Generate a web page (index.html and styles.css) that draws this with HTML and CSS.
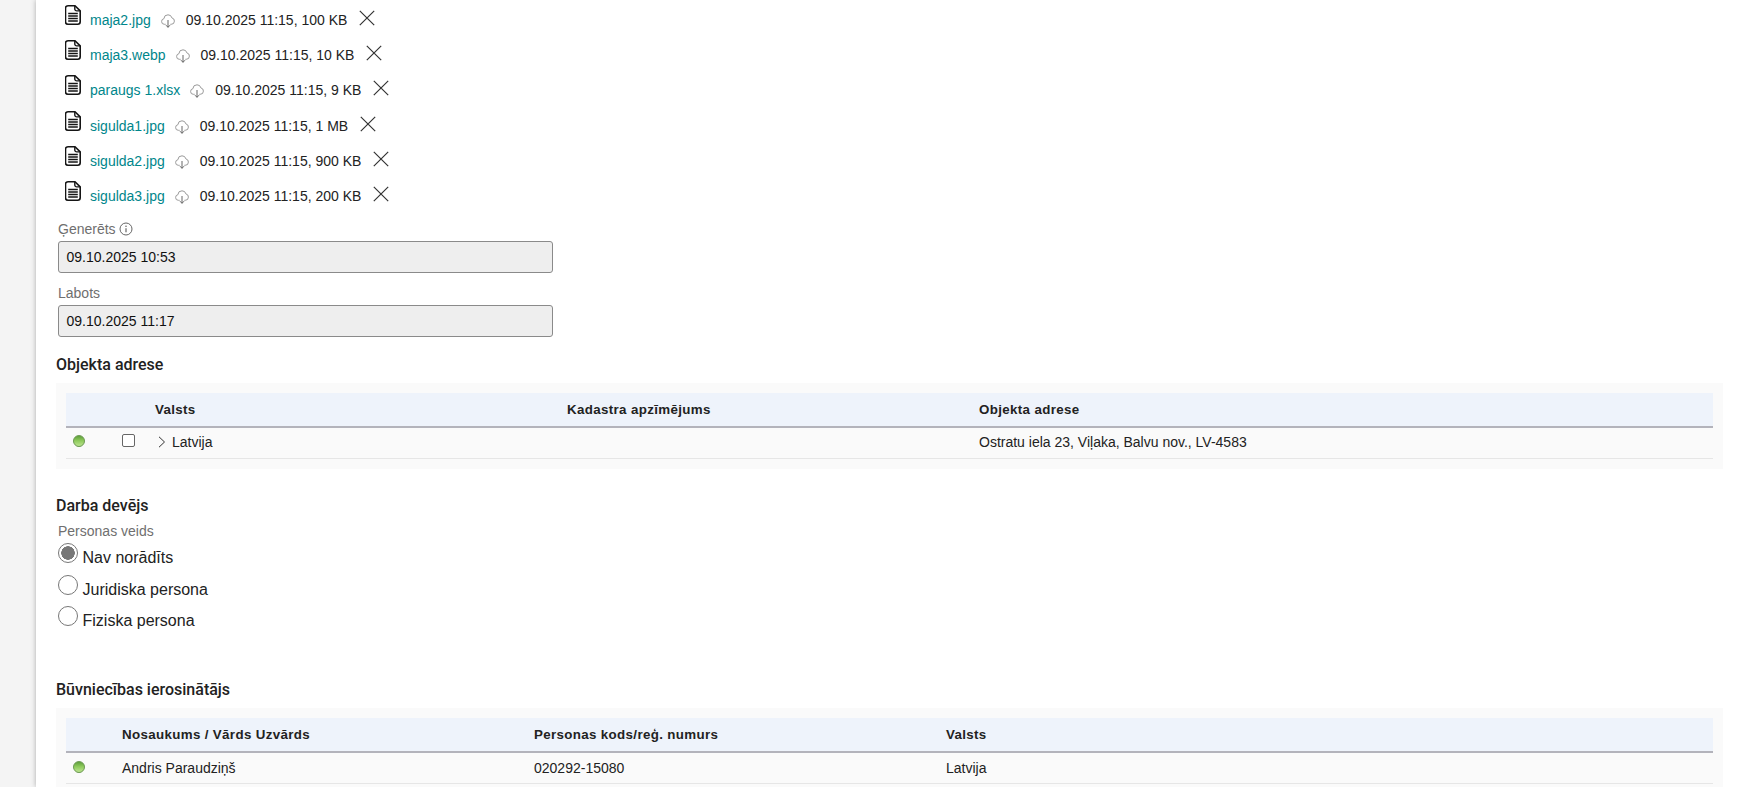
FILE: index.html
```html
<!DOCTYPE html>
<html lang="lv">
<head>
<meta charset="utf-8">
<title>Būvniecības lieta</title>
<link rel="stylesheet" href="styles.css">
</head>
<body>
<svg class="defs" aria-hidden="true">
  <symbol id="i-file" viewBox="0 0 16 20">
    <path d="M3 .8h7l5.200 5.100V16.700a2.500 2.500 0 0 1-2.500 2.500H3a2.500 2.500 0 0 1-2.500-2.500V3.300A2.500 2.500 0 0 1 3 .8Z" fill="none" stroke="#151515" stroke-width="1.600"/>
    <path d="M9.800 1v3a1.900 1.900 0 0 0 1.900 1.900h3.300" fill="none" stroke="#151515" stroke-width="1.400"/>
    <path d="M3.200 8.500h9.600M3.200 11h9.600M3.200 13.500h9.600M3.200 16h9.600" stroke="#151515" stroke-width="1.300"/>
  </symbol>
  <symbol id="i-cloud" viewBox="0 0 14 14">
    <path d="M4.700 10.300H3.300A2.800 2.800 0 0 1 .6 7.500a2.800 2.800 0 0 1 2.300-2.800A4.100 4.100 0 0 1 7 .8a4 4 0 0 1 3.900 3.100 3.200 3.200 0 0 1 2.500 3.200 3.200 3.200 0 0 1-3.200 3.200H9.300" fill="none" stroke="#999" stroke-width="1"/>
    <path d="M7 6v7.300M5 11.200l2 2.100 2-2.100" fill="none" stroke="#666" stroke-width="1"/>
  </symbol>
  <symbol id="i-x" viewBox="0 0 16 16">
    <path d="M.8.8l14.400 14.400M15.200.8L.8 15.200" stroke="#333" stroke-width="1.200" fill="none"/>
  </symbol>
</svg>
<div class="app">
  <aside class="rail"></aside>
  <main class="sheet">
    <ul class="files">
      <li class="file"><svg class="ico-file"><use href="#i-file"/></svg><a class="file-name" href="#">maja2.jpg</a><svg class="ico-cloud"><use href="#i-cloud"/></svg><span class="file-meta">09.10.2025 11:15, 100 KB</span><svg class="ico-x"><use href="#i-x"/></svg></li>
      <li class="file"><svg class="ico-file"><use href="#i-file"/></svg><a class="file-name" href="#">maja3.webp</a><svg class="ico-cloud"><use href="#i-cloud"/></svg><span class="file-meta">09.10.2025 11:15, 10 KB</span><svg class="ico-x"><use href="#i-x"/></svg></li>
      <li class="file"><svg class="ico-file"><use href="#i-file"/></svg><a class="file-name" href="#">paraugs 1.xlsx</a><svg class="ico-cloud"><use href="#i-cloud"/></svg><span class="file-meta">09.10.2025 11:15, 9 KB</span><svg class="ico-x"><use href="#i-x"/></svg></li>
      <li class="file"><svg class="ico-file"><use href="#i-file"/></svg><a class="file-name" href="#">sigulda1.jpg</a><svg class="ico-cloud"><use href="#i-cloud"/></svg><span class="file-meta">09.10.2025 11:15, 1 MB</span><svg class="ico-x"><use href="#i-x"/></svg></li>
      <li class="file"><svg class="ico-file"><use href="#i-file"/></svg><a class="file-name" href="#">sigulda2.jpg</a><svg class="ico-cloud"><use href="#i-cloud"/></svg><span class="file-meta">09.10.2025 11:15, 900 KB</span><svg class="ico-x"><use href="#i-x"/></svg></li>
      <li class="file"><svg class="ico-file"><use href="#i-file"/></svg><a class="file-name" href="#">sigulda3.jpg</a><svg class="ico-cloud"><use href="#i-cloud"/></svg><span class="file-meta">09.10.2025 11:15, 200 KB</span><svg class="ico-x"><use href="#i-x"/></svg></li>
    </ul>

    <div class="field">
      <div class="field-label">Ģenerēts
        <svg class="ico-info" viewBox="0 0 14 14"><circle cx="7" cy="7" r="6" fill="none" stroke="#666" stroke-width="1"/><path d="M7 6.200v4" stroke="#666" stroke-width="1.200"/><circle cx="7" cy="4.200" r=".8" fill="#666"/></svg>
      </div>
      <div class="field-value">09.10.2025 10:53</div>
    </div>
    <div class="field">
      <div class="field-label">Labots</div>
      <div class="field-value">09.10.2025 11:17</div>
    </div>

    <h2 class="section-title section-first">Objekta adrese</h2>
    <div class="panel">
      <table class="grid grid-addr">
        <colgroup><col class="c-dot"><col class="c-check"><col class="c-wide"><col class="c-wide"><col></colgroup>
        <thead>
          <tr><th></th><th></th><th>Valsts</th><th>Kadastra apzīmējums</th><th>Objekta adrese</th></tr>
        </thead>
        <tbody>
          <tr>
            <td><span class="dot"></span></td>
            <td><span class="check"></span></td>
            <td><span class="tree"><svg class="ico-chev" viewBox="0 0 8 12"><path d="M1 .8l5.500 5.200L1 11.200" fill="none" stroke="#333" stroke-width="1"/></svg>Latvija</span></td>
            <td></td>
            <td>Ostratu iela 23, Viļaka, Balvu nov., LV-4583</td>
          </tr>
        </tbody>
      </table>
    </div>

    <h2 class="section-title section-employer">Darba devējs</h2>
    <div class="radio-title">Personas veids</div>
    <div class="radio-row"><span class="radio radio-on"></span><span class="radio-text">Nav norādīts</span></div>
    <div class="radio-row"><span class="radio"></span><span class="radio-text">Juridiska persona</span></div>
    <div class="radio-row"><span class="radio"></span><span class="radio-text">Fiziska persona</span></div>

    <h2 class="section-title section-initiator">Būvniecības ierosinātājs</h2>
    <div class="panel">
      <table class="grid">
        <colgroup><col class="c-first"><col class="c-wide"><col class="c-wide"><col></colgroup>
        <thead>
          <tr><th></th><th>Nosaukums / Vārds Uzvārds</th><th>Personas kods/reģ. numurs</th><th>Valsts</th></tr>
        </thead>
        <tbody>
          <tr>
            <td><span class="dot"></span></td>
            <td>Andris Paraudziņš</td>
            <td>020292-15080</td>
            <td>Latvija</td>
          </tr>
        </tbody>
      </table>
    </div>
  </main>
</div>
</body>
</html>
```
FILE: styles.css
```css
* { box-sizing: border-box; }
html, body { margin: 0; height: 787px; overflow: hidden; background: #f4f4f4; }
body { font-family: "Liberation Sans", Arial, sans-serif; font-size: 14px; color: #222; }
.defs { position: absolute; width: 0; height: 0; }

.app { display: flex; height: 787px; overflow: hidden; }
.rail { width: 36px; flex: none; background: #f4f4f4; }
.sheet { flex: 1; min-width: 0; background: #fff; padding: 3px 17px 0 20px; box-shadow: 0 0 5px rgba(0,0,0,.3); }

.files { list-style: none; margin: 0 0 7px; padding: 0 0 0 9px; }
.file { display: flex; align-items: flex-start; height: 35.2px; }
.ico-file { width: 16px; height: 20px; margin-top: 2px; flex: none; }
.file-name { margin: 9px 0 0 9px; line-height: 16px; color: #00868b; text-decoration: none; }
.ico-cloud { width: 14px; height: 14px; margin: 11px 0 0 10px; flex: none; }
.file-meta { margin: 9px 0 0 11px; line-height: 16px; color: #222; }
.ico-x { width: 16px; height: 16px; margin: 7px 0 0 12px; flex: none; }

.field { margin: 0 0 12px 2px; width: 495px; }
.field-label { display: flex; align-items: center; gap: 3px; height: 16px; margin-bottom: 4px; font-size: 14px; color: #6f6f6f; }
.ico-info { width: 14px; height: 14px; }
.field-value { height: 32px; line-height: 30px; padding: 0 7.500px; background: #eee; border: 1px solid #8a8a8a; border-radius: 3px; font-size: 14px; color: #111; }

.section-title { margin: 0; height: 20px; line-height: 20px; font-family: Roboto, "Liberation Sans", sans-serif; font-size: 16px; font-weight: 500; color: #222; }
.section-first { margin: 18px 0 8px; }
.section-employer { margin: 27px 0 7px; }
.section-initiator { margin: 42.100px 0 8px; }

.panel { background: #fafafa; padding: 10px; }
.grid { width: 100%; border-collapse: collapse; table-layout: fixed; font-size: 14px; color: #222; }
.c-dot { width: 45px; }
.c-check { width: 44px; }
.c-wide { width: 412px; }
.c-first { width: 56px; }
.grid th { height: 34px; padding: 0; text-align: left; font-size: 13.330px; font-weight: 700; letter-spacing: .35px; background: #eef3fb; border-bottom: 2px solid #b3b3bb; }
.grid td { height: 31.500px; padding: 0; border-bottom: 1px solid #e6e6e6; vertical-align: middle; }
.grid-addr td { padding-bottom: 2px; }

.dot { display: block; width: 12px; height: 12px; margin: -2px 0 0 7px; border-radius: 50%; border: 1px solid #6d9a55; background: linear-gradient(#5f9f3c 0, #8cc95a 45%, #bce48f 100%); }
.check { display: block; width: 13px; height: 13px; margin: -3px 0 0 11px; background: #fff; border: 1px solid #666; border-radius: 2px; }
.tree { display: flex; align-items: center; gap: 6px; padding-left: 3px; }
.ico-chev { width: 8px; height: 12px; flex: none; }

.radio-title { margin-left: 2px; height: 16px; line-height: 16px; margin-bottom: 3.900px; font-size: 14px; color: #6f6f6f; }
.radio-row { display: flex; align-items: flex-start; gap: 4.500px; height: 31.500px; margin-left: 2px; }
.radio { width: 20px; height: 20px; flex: none; border-radius: 50%; background: #fff; border: 1px solid #777; }
.radio-on { background: radial-gradient(circle, #777 0, #777 6.500px, #fff 7px); }
.radio-text { margin-top: 5px; line-height: 20px; font-size: 16px; color: #222; }
```
